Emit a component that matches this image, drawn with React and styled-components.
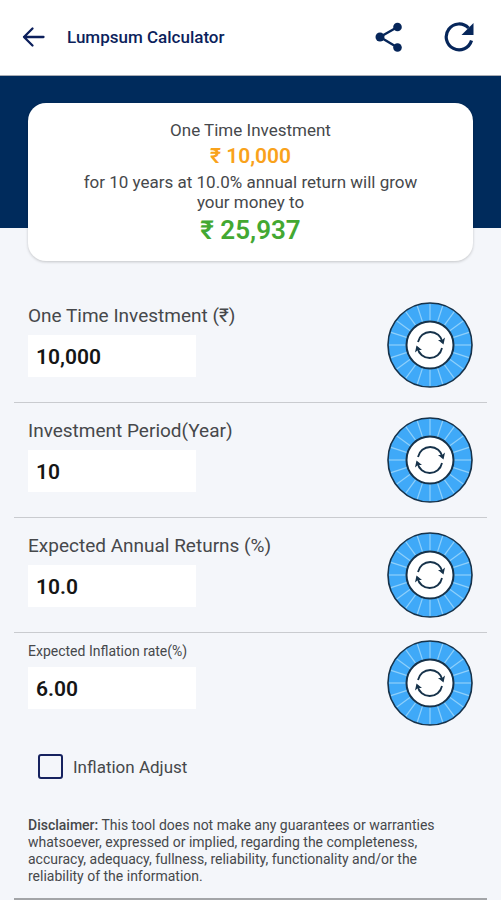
import React, { useState } from 'react';
import styled, { createGlobalStyle } from 'styled-components';

const fields = [
  { id: 'amount', label: 'One Time Investment (₹)', value: '10,000' },
  { id: 'period', label: 'Investment Period(Year)', value: '10' },
  { id: 'returns', label: 'Expected Annual Returns (%)', value: '10.0' },
  { id: 'inflation', label: 'Expected Inflation rate(%)', value: '6.00', small: true },
];

const ticks = Array.from({ length: 20 }, (_, i) => i * 18);

const BackIcon = () => (
  <svg width='24' height='24' viewBox='0 0 24 24' fill='none' stroke='currentColor' strokeWidth='2.300' strokeLinecap='round' strokeLinejoin='round'>
    <path d='M21.500 12H2M10.500 3.500L2 12l8.500 8.500' />
  </svg>
);

const ShareIcon = () => (
  <svg width='28' height='30' viewBox='0 0 28 30' fill='currentColor' stroke='currentColor'>
    <path d='M22.500 5L5 15l17.500 10.500' fill='none' strokeWidth='2.400' />
    <circle cx='22.500' cy='5' r='4.300' stroke='none' />
    <circle cx='5' cy='15' r='4.500' stroke='none' />
    <circle cx='22.500' cy='25.500' r='4.300' stroke='none' />
  </svg>
);

const RefreshIcon = () => (
  <svg width='30' height='30' viewBox='0 0 30 30'>
    <path d='M27.500 18.500A12.900 12.900 0 1 1 24.500 6' fill='none' stroke='currentColor' strokeWidth='3.200' />
    <path d='M29.500 1V13H17.500z' fill='currentColor' />
  </svg>
);

const DialIcon = () => (
  <svg width='86' height='86' viewBox='-43 -43 86 86'>
    <circle r='42' fill='#3fa9f8' stroke='#16324a' strokeWidth='1.600' />
    {ticks.map((angle) => (
      <path key={angle} d='M24 0H41' stroke='#8fd0fb' strokeWidth='1.200' transform={`rotate(${angle})`} />
    ))}
    <circle r='23.500' fill='#fff' stroke='#16324a' strokeWidth='2' />
    <g fill='none' stroke='#16324a' strokeWidth='1.800'>
      <path d='M-12 -3A12.500 12.500 0 0 1 12.500 -3' />
      <path d='M12 3A12.500 12.500 0 0 1 -12.500 3' />
    </g>
    <g fill='#16324a'>
      <path d='M8 -5L12 -5L15 -7.500L13.500 -.5z' />
      <path d='M-8 5L-12 5L-15 7.500L-13.500 .5z' />
    </g>
  </svg>
);

const Field = ({ id, label, value, small }) => {
  const [text, setText] = useState(value);
  return (
    <Row $last={small}>
      <FieldBody>
        <Label htmlFor={id} $small={small}>
          {label}
        </Label>
        <Input id={id} value={text} onChange={(e) => setText(e.target.value)} />
      </FieldBody>
      <Dial type='button' aria-label={label}>
        <DialIcon />
      </Dial>
    </Row>
  );
};

const App = () => {
  return (
    <>
      <GlobalStyle />
      <Header>
        <IconButton aria-label='Back'>
          <BackIcon />
        </IconButton>
        <Title>Lumpsum Calculator</Title>
        <Actions>
          <IconButton aria-label='Share'>
            <ShareIcon />
          </IconButton>
          <IconButton aria-label='Reset'>
            <RefreshIcon />
          </IconButton>
        </Actions>
      </Header>
      <Banner>
        <Card>
          <Line>One Time Investment</Line>
          <Invested>₹ 10,000</Invested>
          <Line>
            for 10 years at 10.0% annual return will grow
            <br />
            your money to
          </Line>
          <Result>₹ 25,937</Result>
        </Card>
      </Banner>
      <Form>
        {fields.map((field) => (
          <Field key={field.id} {...field} />
        ))}
        <CheckLabel>
          <Checkbox />
          Inflation Adjust
        </CheckLabel>
        <Disclaimer>
          <strong>Disclaimer:</strong> This tool does not make any guarantees or warranties
          whatsoever, expressed or implied, regarding the completeness, accuracy, adequacy,
          fullness, reliability, functionality and/or the reliability of the information.
        </Disclaimer>
      </Form>
    </>
  );
};

export default App;

const GlobalStyle = createGlobalStyle`
  * {
    box-sizing: border-box;
  }
  body {
    margin: 0;
    background: #f4f6fa;
    color: #46484b;
    font-family: Roboto, 'Liberation Sans', sans-serif;
  }
`;

const Header = styled.header`
  display: flex;
  align-items: center;
  height: 76px;
  padding: 0 27px 2px 22px;
  background: #fff;
  border-bottom: 1px solid #a9adb5;
  color: #0c1f5c;
`;

const IconButton = styled.button`
  display: flex;
  padding: 0;
  background: transparent;
  border: none;
  color: inherit;
  cursor: pointer;
`;

const Title = styled.h1`
  margin: 0 0 0 21px;
  font-size: 17px;
  font-weight: 500;
`;

const Actions = styled.div`
  display: flex;
  align-items: center;
  gap: 41px;
  margin-left: auto;
  color: #06265a;
`;

const Banner = styled.section`
  padding: 27px 28px 0;
  background: linear-gradient(#002b5c 152px, transparent 152px);
`;

const Card = styled.div`
  display: flex;
  flex-direction: column;
  align-items: center;
  padding: 17px 16px 13px;
  background: #fff;
  border-radius: 18px;
  box-shadow: 0 1px 3px rgba(0, 0, 0, 0.2);
  text-align: center;
`;

const Line = styled.p`
  margin: 0;
  font-size: 17px;
  line-height: 20px;
`;

const Invested = styled.strong`
  font-size: 21px;
  font-weight: 600;
  line-height: 32px;
  color: #f9a21b;
`;

const Result = styled.strong`
  font-size: 26px;
  font-weight: 600;
  line-height: 36px;
  color: #43a832;
`;

const Form = styled.form`
  padding: 27px 14px 0;
`;

const Row = styled.div`
  display: flex;
  justify-content: space-between;
  align-items: flex-start;
  padding: ${({ $last }) => ($last ? '7px 14px 28px' : '14px')};
  border-bottom: ${({ $last }) => ($last ? 'none' : '1px solid #c9cbcf')};
`;

const FieldBody = styled.div`
  display: flex;
  flex-direction: column;
  gap: 7px;
  padding-top: 2px;
`;

const Label = styled.label`
  font-size: ${({ $small }) => ($small ? '14px' : '19px')};
  line-height: ${({ $small }) => ($small ? '18px' : '24px')};
`;

const Input = styled.input`
  width: 168px;
  height: 42px;
  padding: 2px 8px 0;
  background: #fff;
  border: none;
  color: #151515;
  font-family: inherit;
  font-size: 21px;
  font-weight: 600;
`;

const Dial = styled.button`
  display: flex;
  padding: 0;
  background: transparent;
  border: none;
  border-radius: 50%;
  cursor: pointer;
`;

const CheckLabel = styled.label`
  display: flex;
  align-items: center;
  gap: 10px;
  padding-left: 24px;
  font-size: 17px;
`;

const Checkbox = styled.input.attrs({ type: 'checkbox' })`
  appearance: none;
  width: 25px;
  height: 25px;
  margin: 0;
  border: 2px solid #16225f;
  border-radius: 3px;
  &:checked {
    background: #16225f;
  }
`;

const Disclaimer = styled.p`
  margin: 38px 0 0;
  padding: 0 28px 13px 14px;
  border-bottom: 2px solid #a3a5a8;
  font-size: 14px;
  line-height: 17px;
  strong {
    font-weight: 500;
  }
`;
